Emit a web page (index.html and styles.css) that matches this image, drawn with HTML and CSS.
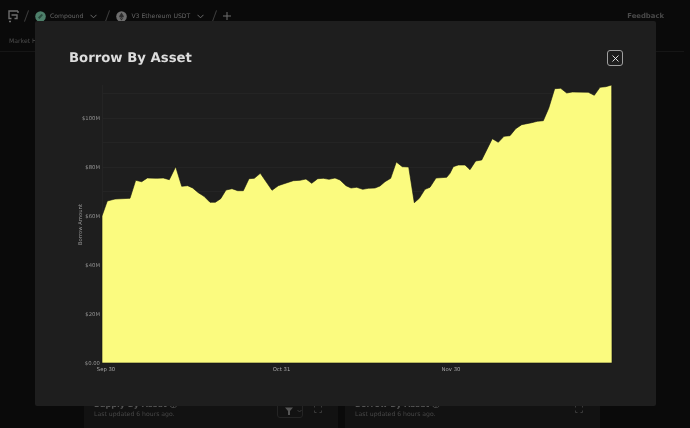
FILE: index.html
```html
<!DOCTYPE html>
<html lang="en">
<head>
<meta charset="utf-8">
<title>Borrow By Asset</title>
<link rel="stylesheet" href="styles.css">
</head>
<body>
<div class="page">
  <header class="topbar">
    <svg class="logo" width="11" height="13" viewBox="0 0 11 13"><path d="M10 1H1V8.5H3.5M10 1V3M3.5 5H9V8.5H6.5M1 11.5H3" fill="none" stroke="#6e6e6e" stroke-width="1.4"/></svg>
    <span class="slash"></span>
    <svg class="coin" width="11" height="11" viewBox="0 0 11 11"><circle cx="5.5" cy="5.5" r="5.3" fill="#4d7f6a"/><path d="M3 6.5L6.5 3L8 4L4.5 8Z" fill="#2a4a3d"/></svg>
    <span class="crumb">Compound</span>
    <svg class="chev" width="7" height="5" viewBox="0 0 7 5"><path d="M0.5 0.8L3.5 3.8L6.5 0.8" fill="none" stroke="#6a6a6a" stroke-width="1"/></svg>
    <span class="slash"></span>
    <svg class="coin" width="11" height="11" viewBox="0 0 11 11"><circle cx="5.5" cy="5.5" r="5.3" fill="#6e6e6e"/><path d="M5.5 1.5L8 5.5L5.5 7L3 5.5ZM3.2 6.2L5.5 7.7L7.8 6.2L5.5 9.5Z" fill="#2c2c2c"/></svg>
    <span class="crumb">V3 Ethereum USDT</span>
    <svg class="chev" width="7" height="5" viewBox="0 0 7 5"><path d="M0.5 0.8L3.5 3.8L6.5 0.8" fill="none" stroke="#6a6a6a" stroke-width="1"/></svg>
    <span class="slash"></span>
    <svg class="plus" width="8" height="8" viewBox="0 0 8 8"><path d="M4 0V8M0 4H8" stroke="#6e6e6e" stroke-width="1"/></svg>
    <span class="feedback">Feedback</span>
  </header>
  <nav class="tabs"><span class="tab">Market Health</span></nav>
  <main class="cards">
    <section class="card">
      <div class="card-text">
        <div class="card-title">Supply By Asset ⓘ</div>
        <div class="card-sub">Last updated 6 hours ago.</div>
      </div>
      <div class="filter">
        <svg width="8" height="8" viewBox="0 0 8 8"><path d="M0 0.5H8L5 4V8H3V4Z" fill="#555"/></svg>
        <svg width="5" height="4" viewBox="0 0 5 4"><path d="M0.5 1L2.5 3L4.5 1" fill="none" stroke="#444" stroke-width="0.8"/></svg>
      </div>
      <svg class="expand" width="8" height="8" viewBox="0 0 8 8"><path d="M0.5 2.5V0.5H2.5M5.5 0.5H7.5V2.5M7.5 5.5V7.5H5.5M2.5 7.5H0.5V5.5" fill="none" stroke="#3a3a3a"/></svg>
    </section>
    <section class="card card-wide">
      <div class="card-text">
        <div class="card-title">Borrow By Asset ⓘ</div>
        <div class="card-sub">Last updated 6 hours ago.</div>
      </div>
      <svg class="expand" width="8" height="8" viewBox="0 0 8 8"><path d="M0.5 2.5V0.5H2.5M5.5 0.5H7.5V2.5M7.5 5.5V7.5H5.5M2.5 7.5H0.5V5.5" fill="none" stroke="#3a3a3a"/></svg>
    </section>
  </main>
  <div class="modal">
    <div class="modal-head">
      <h1 class="modal-title">Borrow By Asset</h1>
      <button class="close" aria-label="Close">
        <svg width="7" height="7" viewBox="0 0 7 7"><path d="M0.5 0.5L6.5 6.5M6.5 0.5L0.5 6.5" stroke="#f0f0f0" stroke-width="0.9"/></svg>
      </button>
    </div>
    <svg class="chart" width="560" height="300" viewBox="70 80 560 300">
      <g class="grid">
        <line x1="102" x2="612" y1="93.5" y2="93.5"/>
        <line x1="102" x2="612" y1="118.5" y2="118.5"/>
        <line x1="102" x2="612" y1="142.5" y2="142.5"/>
        <line x1="102" x2="612" y1="167.5" y2="167.5"/>
        <line x1="102" x2="612" y1="191.5" y2="191.5"/>
        <line x1="102" x2="612" y1="216.5" y2="216.5"/>
        <line x1="102.5" x2="102.5" y1="85" y2="363"/>
      </g>
      <polygon class="area" points="102,363 102,216 107.3,201 115,199 130,198.3 135.7,180.3 141.7,181.7 147.3,178 156.7,178.3 163.3,178 169.3,179.7 175.7,166.7 181.7,186.3 187.7,185.7 192.7,188 198.3,192.7 204,196.3 210,202.3 215.3,202.3 220.7,198.7 226,190 232,188.7 237.7,190.7 243.3,190.7 249,178.7 254.3,178.3 260.3,173.3 272,190.3 278.3,185.7 283.3,184 293.3,180.7 300,180.3 306,179 311.7,183.3 317.7,178.7 323.3,178.3 329,179.3 335,178 340,180 346,185.7 351,188 356.7,187.3 362.7,189.3 368.3,188.3 375,188 380,186 385,181.7 390.7,178.3 396.3,162 402.3,166.7 408.7,167 414.3,202.7 419.3,198.3 425,189.3 430,187.3 436,178 446.7,177.3 450,173.3 453.3,166.7 458.3,165 465,165 470,169.7 475.7,161 481.7,160 492.3,138.7 498.3,142.3 504,136.3 510,135.7 515.7,128.7 521.7,124.7 531.7,122.7 537.3,121.3 543.3,120.7 548.7,108.3 554.7,88.7 560.7,88.3 566.7,93 572.3,92 588.3,92.3 594.3,95.3 600,87.3 605.7,86.7 611.7,85 612,363"/>
      <g class="ylab">
        <text x="100" y="120.3">$100M</text>
        <text x="100" y="169.3">$80M</text>
        <text x="100" y="218.3">$60M</text>
        <text x="100" y="267.3">$40M</text>
        <text x="100" y="316.3">$20M</text>
        <text x="100" y="365.3">$0.00</text>
      </g>
      <g class="xlab">
        <text x="106" y="370.8">Sep 30</text>
        <text x="281.5" y="370.8">Oct 31</text>
        <text x="451" y="370.8">Nov 30</text>
      </g>
      <text class="ytitle" transform="translate(82 224.5) rotate(-90)">Borrow Amount</text>
    </svg>
  </div>
</div>
</body>
</html>
```

FILE: styles.css
```css
* { box-sizing: border-box; }
html, body { margin: 0; height: 100%; }
body { background: #0a0a0a; font-family: "DejaVu Sans", sans-serif; overflow: hidden; text-rendering: geometricPrecision; }
.page { position: relative; width: 690px; height: 428px; overflow: hidden; background: #0a0a0a; filter: blur(0.3px); }
.topbar { display: flex; align-items: center; height: 32px; padding-left: 8px; color: #666; font-size: 6.15px; }
.logo { margin-right: 7px; }
.slash { width: 1px; height: 12px; background: #3e3e3e; transform: rotate(20deg); margin-right: 8px; }
.coin { margin-right: 4px; }
.crumb { margin-right: 7px; white-space: nowrap; }
.chev { margin-right: 10px; }
.feedback { margin-left: auto; margin-right: 26px; font-weight: 700; font-size: 6.85px; color: #4a4a4a; }
.tabs { height: 20px; border-bottom: 1px solid #161616; width: 684px; padding: 6px 0 0 9px; font-size: 6.15px; color: #4e4e4e; }
.cards { display: flex; gap: 7px; padding: 335px 0 0 84px; }
.card { display: flex; align-items: flex-start; width: 254px; height: 60px; background: #121212; padding: 13px 10px 0 10px; }
.card-wide { width: 255px; }
.card-text { flex: 1; }
.card-title { font-size: 8px; font-weight: 700; color: #555; line-height: 10px; }
.card-sub { font-size: 6.15px; color: #484848; line-height: 10px; }
.filter { display: flex; align-items: center; gap: 4px; width: 26px; height: 15px; border: 1px solid #242424; border-radius: 3px; padding-left: 7px; margin-top: 3px; margin-right: 11px; }
.expand { margin-top: 5px; margin-right: 6px; }
.card-wide .expand { margin-right: 7px; }
.modal { position: absolute; left: 35px; top: 21px; width: 621px; height: 385px; background: #1e1e1e; border-radius: 2px; padding: 0 35px; }
.modal-head { display: flex; justify-content: space-between; align-items: center; height: 59px; padding: 15px 0 0 0; }
.modal-title { margin: 0 0 0 -1px; font-size: 13.25px; font-weight: 700; color: #dcdcdc; }
.close { display: flex; align-items: center; justify-content: center; width: 16px; height: 16px; padding: 0; margin-right: -2px; background: #1e1e1e; border: 1px solid #a0a0a0; border-radius: 3px; }
.chart { display: block; overflow: visible; }
.grid line { stroke: #242424; stroke-width: 1; }
.area { fill: #fbfb7f; stroke: #111; stroke-width: 0.6; }
.ylab text { font-size: 5.3px; fill: #929292; text-anchor: end; }
.xlab text { font-size: 5.3px; fill: #a8a8a8; text-anchor: middle; }
.ytitle { font-size: 5.3px; fill: #9a9a9a; text-anchor: middle; }
```
